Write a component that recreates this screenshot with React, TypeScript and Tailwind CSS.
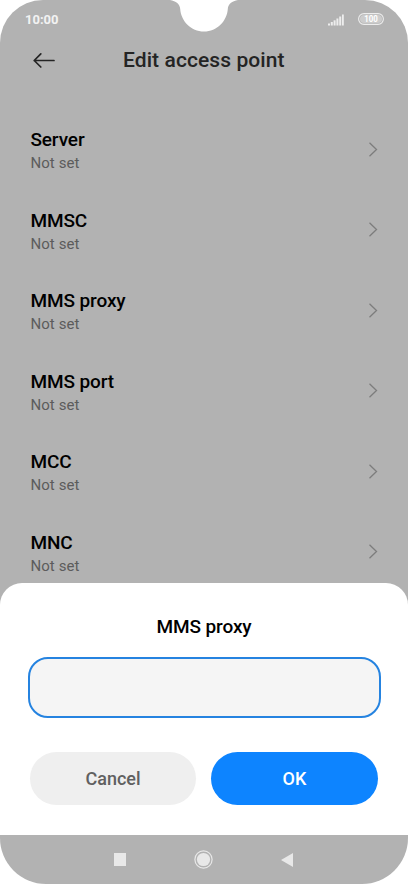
import { ChangeEvent, useState } from 'react';

const settings = ['Server', 'MMSC', 'MMS proxy', 'MMS port', 'MCC', 'MNC'];

const StatusBar = () => (
  <div className="relative flex h-10 shrink-0 items-center justify-between pl-[25px] pr-[24px]">
    <span className="text-[13px] font-bold leading-4 text-[#f2f2f2]">10:00</span>

    {/* Camera notch */}
    <svg className="absolute left-[170px] top-0" width="68" height="32" viewBox="0 0 68 32">
      <path d="M0 0C6 1 10 4 10.200 9C11 21 21 31.500 34 31.500S57 21 57.800 9C58 4 62 1 68 0Z" fill="#fff" />
    </svg>

    <div className="flex items-center gap-[14px]">
      <svg className="-mt-px" width="16" height="12" viewBox="0 0 16 12" fill="#ededed">
        <rect x="0" y="9.500" width="2" height="2" />
        <rect x="2.800" y="8" width="2" height="3.500" />
        <rect x="5.600" y="6.300" width="2" height="5.200" />
        <rect x="8.400" y="4.500" width="2" height="7" />
        <rect x="11.200" y="2.500" width="2" height="9" />
        <rect x="14" y="0.500" width="1.800" height="11" />
      </svg>
      <svg className="-mt-[2px]" width="26" height="12" viewBox="0 0 26 12">
        <rect x="0.600" y="0.600" width="24.800" height="10.800" rx="5.400" fill="#b2b2b2" stroke="#ededed" strokeWidth="1.100" />
        <rect x="2" y="2" width="22" height="8" rx="4" fill="#cccccc" />
        <text x="13" y="9.200" textAnchor="middle" fontSize="9" fontWeight="700" fill="#fff" textLength="13.500" lengthAdjust="spacingAndGlyphs">100</text>
      </svg>
    </div>
  </div>
);

const Header = () => (
  <div className="flex h-10 shrink-0 items-center pl-[33px]">
    <button aria-label="Back">
      <svg width="23" height="16" viewBox="0 0 23 16" fill="none" stroke="#242424" strokeWidth="1.700" strokeLinecap="round" strokeLinejoin="round">
        <path d="M21 8.500H1.200M7.800 1.800L1.200 8.500L7.800 15" />
      </svg>
    </button>
    <h1 className="ml-[67px] text-[21px] font-medium leading-6 tracking-[0.09px] text-[#242424]">Edit access point</h1>
  </div>
);

const SettingRow = ({ label }: { label: string }) => (
  <div className="flex h-[80.500px] shrink-0 items-center justify-between pl-[30.400px] pr-[30px]">
    <div className="pt-[2px]">
      <p className="text-[19px] font-medium leading-6 tracking-[-0.1px] text-black">{label}</p>
      <p className="text-[15px] leading-[22px] tracking-[0.1px] text-[#5c5c5c]">Not set</p>
    </div>
    <svg className="-mt-[2px]" width="9" height="15" viewBox="0 0 9 15" fill="none" stroke="#7d7d7d" strokeWidth="1.300">
      <path d="M0.500 0.800L7.500 7.500L0.500 14.200" />
    </svg>
  </div>
);

const ProxyDialog = () => {
  const [proxy, setProxy] = useState('');

  return (
    <div className="absolute inset-x-0 bottom-0 h-[252.500px] rounded-t-[22px] bg-white pl-[27.500px] pr-[27.500px] pt-[32px]">
      <h2 className="text-center text-[19px] font-medium leading-6 tracking-[-0.1px] text-black">MMS proxy</h2>
      <input
        aria-label="MMS proxy"
        value={proxy}
        onChange={(e: ChangeEvent<HTMLInputElement>) => setProxy(e.target.value)}
        className="mt-[18px] block h-[61px] w-full rounded-[20px] border-2 border-[#2583e0] bg-[#f5f5f5] px-4 text-lg outline-none"
      />
      <div className="mt-[34px] flex gap-[15px] pl-[2.500px] pr-[2.500px]">
        <button className="h-[53px] w-[166px] rounded-full bg-[#efefef] text-[18px] font-medium text-[#606060]">Cancel</button>
        <button className="h-[53px] w-[167px] rounded-full bg-[#0d84ff] text-[18px] font-medium text-white">OK</button>
      </div>
    </div>
  );
};

const NavigationBar = () => (
  <div className="flex h-[49px] shrink-0 items-center justify-center gap-[68px] pr-[1px]">
    <div className="h-[12.500px] w-[12.500px] bg-[#e8e8e8]"></div>
    <svg width="19" height="19" viewBox="0 0 19 19">
      <circle cx="9.500" cy="9.500" r="8.600" fill="none" stroke="#e8e8e8" strokeWidth="1.200" />
      <circle cx="9.500" cy="9.500" r="6.600" fill="#e8e8e8" />
    </svg>
    <svg width="12" height="14" viewBox="0 0 12 14">
      <path d="M12 0V14L0 7Z" fill="#e8e8e8" />
    </svg>
  </div>
);

export default function App() {
  return (
    <div className="h-[884px] w-[408px] bg-white font-['Roboto',sans-serif]">
      <div className="flex h-full flex-col overflow-hidden rounded-b-[46px] rounded-t-[43px] bg-[#b2b2b2]">
        <div className="relative flex h-[835px] shrink-0 flex-col overflow-hidden">
          <StatusBar />
          <Header />
          <div className="flex flex-col pt-[30px]">
            {settings.map((label) => (
              <SettingRow key={label} label={label} />
            ))}
          </div>
          <ProxyDialog />
        </div>
        <NavigationBar />
      </div>
    </div>
  );
}
